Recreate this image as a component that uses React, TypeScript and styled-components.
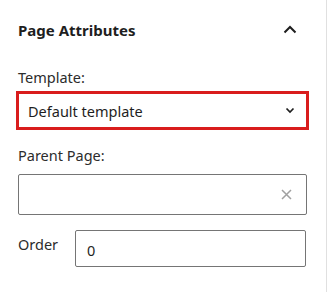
import styled, { createGlobalStyle } from "styled-components";

const GlobalStyle = createGlobalStyle`
  body {
    margin: 0;
    background: #fff;
    font-family: "Noto Sans", "Open Sans", sans-serif;
    color: #1e1e1e;
  }
`;

const Sidebar = styled.div`
  width: 327px;
  height: 292px;
  border-right: 1px solid #e0e0e0;
  box-sizing: border-box;
  background: #fff;
`;

const Header = styled.div`
  height: 59px;
  display: flex;
  align-items: center;
  justify-content: space-between;
  padding: 0 29px 0 18px;
`;

const Title = styled.h2`
  margin: 0;
  font-size: 15px;
  font-weight: 700;
  color: #1e1e1e;
`;

const Body = styled.div`
  padding: 8px 19px 0 18px;
  display: flex;
  flex-direction: column;
`;

const Label = styled.div`
  font-size: 14.5px;
  line-height: 20px;
  margin-bottom: 4px;
  color: #2c2c2c;
`;

const SelectBox = styled.div`
  margin-left: -2px;
  margin-right: -2px;
  height: 39px;
  border: 3px solid #d91d1d;
  box-sizing: border-box;
  display: flex;
  align-items: center;
  justify-content: space-between;
  padding: 0 11px 0 9px;
  font-size: 14.5px;
`;

const Field = styled.div`
  height: 41px;
  border: 1px solid #757575;
  border-radius: 2px;
  box-sizing: border-box;
  display: flex;
  align-items: center;
  justify-content: flex-end;
  padding: 0 14px;
  margin-top: 5px;
`;

const OrderRow = styled.div`
  display: flex;
  align-items: flex-start;
  margin-top: 15px;
`;

const OrderLabel = styled.div`
  font-size: 14.5px;
  width: 57px;
  padding-top: 4px;
  color: #2c2c2c;
`;

const NumberBox = styled.div`
  flex: 1;
  height: 37px;
  border: 1px solid #757575;
  border-radius: 2px;
  box-sizing: border-box;
  display: flex;
  align-items: center;
  padding: 3px 11px 0;
  font-size: 14.5px;
  margin-right: 1px;
`;

const Gap = styled.div<{ h: number }>`
  height: ${(p) => p.h}px;
`;

function ChevronUp() {
  return (
    <svg width="14" height="9" viewBox="0 0 14 9">
      <path d="M1.5 7.5 L7 2 L12.5 7.5" fill="none" stroke="#1e1e1e" strokeWidth="2" />
    </svg>
  );
}

function ChevronDown() {
  return (
    <svg width="10" height="7" viewBox="0 0 10 7">
      <path d="M1.5 1.5 L5 5 L8.5 1.5" fill="none" stroke="#1e1e1e" strokeWidth="1.7" />
    </svg>
  );
}

export default function App() {
  return (
    <>
      <GlobalStyle />
      <Sidebar>
        <Header>
          <Title>Page Attributes</Title>
          <ChevronUp />
        </Header>
        <Body>
          <Label>Template:</Label>
          <SelectBox>
            <span>Default template</span>
            <ChevronDown />
          </SelectBox>
          <Gap h={15} />
          <Label>Parent Page:</Label>
          <Field>
            <svg width="11" height="11" viewBox="0 0 11 11">
              <path d="M1 1 L10 10 M10 1 L1 10" stroke="#a0a0a0" strokeWidth="1.5" />
            </svg>
          </Field>
          <OrderRow>
            <OrderLabel>Order</OrderLabel>
            <NumberBox>0</NumberBox>
          </OrderRow>
        </Body>
      </Sidebar>
    </>
  );
}
